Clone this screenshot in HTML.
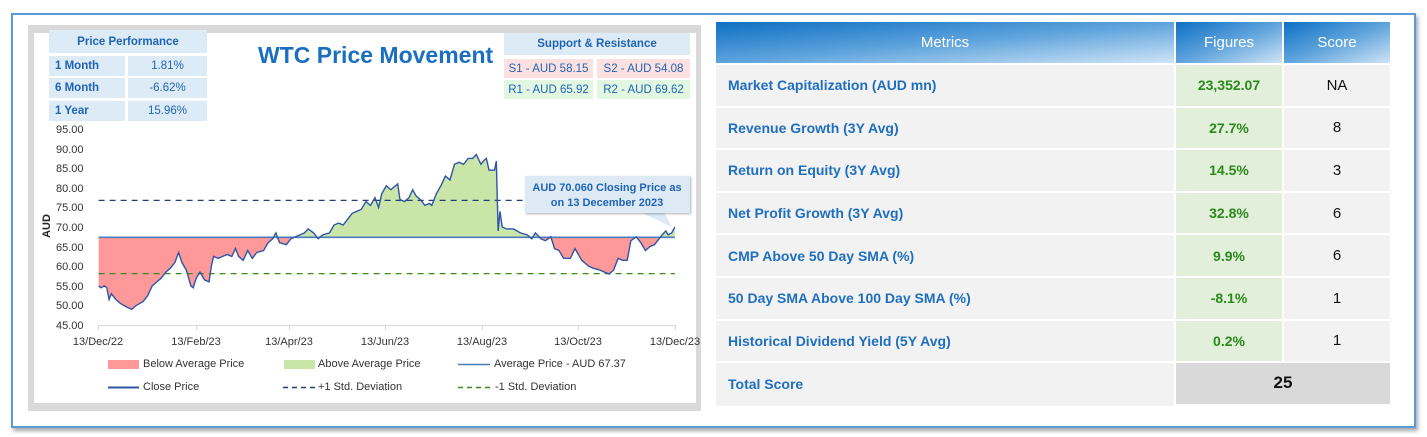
<!DOCTYPE html>
<html><head><meta charset="utf-8"><style>
*{margin:0;padding:0;box-sizing:border-box}
body{width:1427px;height:437px;background:#fff;position:relative;overflow:hidden;font-family:"Liberation Sans",sans-serif}
.abs{position:absolute}
.outer{left:11px;top:13px;width:1405px;height:415px;border:2px solid #5b9bd5;box-shadow:2px 3px 4px rgba(0,0,0,.35)}
.frame{left:28px;top:25px;width:673px;height:386px;background:#d9d9d9}
.inner{left:34px;top:33px;width:662px;height:370px;background:#fff}
.c{position:absolute;background:#ddebf7;color:#1f64b4;font-size:11.5px;display:flex;align-items:center}
.b{font-weight:bold}
.yl{position:absolute;left:56px;font-size:11px;color:#333;width:30px}
.xl{position:absolute;top:336px;font-size:11px;color:#333;width:70px;text-align:center}
.lg{position:absolute;font-size:11px;color:#333}
table{position:absolute;left:716px;top:22px;border-collapse:separate;border-spacing:0}
td{height:42.6px;border-bottom:2px solid #fff;font-size:14px;font-weight:bold}
.m{width:460px;background:#f2f2f2;color:#1f6fc0;padding-left:12px;border-right:2px solid #fff}
.f{width:108px;background:#e2efda;color:#2a8a1a;text-align:center;border-right:2px solid #fff}
.s{width:106px;background:#f2f2f2;color:#111;text-align:center;font-weight:normal;font-size:15px}
th{height:43px;color:#fff;font-weight:normal;font-size:15px;border-bottom:2px solid #fff;background:linear-gradient(to bottom right,#0e6fc4 0%,#5ea3dc 50%,#cfe4f6 100%)}
</style></head><body>
<div class="abs outer"></div>
<div class="abs frame"></div>
<div class="abs inner"></div>

<div class="c b" style="left:49px;top:30px;width:158px;height:23px;justify-content:center">Price Performance</div>
<div class="c b" style="left:49px;top:56px;width:76px;height:20px;padding-left:6px">1 Month</div>
<div class="c" style="left:128px;top:56px;width:79px;height:20px;justify-content:center">1.81%</div>
<div class="c b" style="left:49px;top:78px;width:76px;height:20px;padding-left:6px">6 Month</div>
<div class="c" style="left:128px;top:78px;width:79px;height:20px;justify-content:center">-6.62%</div>
<div class="c b" style="left:49px;top:101px;width:76px;height:20px;padding-left:6px">1 Year</div>
<div class="c" style="left:128px;top:101px;width:79px;height:20px;justify-content:center">15.96%</div>

<div class="abs" style="left:258px;top:42px;font-size:23px;font-weight:bold;color:#1a6fc0">WTC Price Movement</div>

<div class="c b" style="left:504px;top:33px;width:186px;height:22px;justify-content:center">Support &amp; Resistance</div>
<div class="c" style="left:504px;top:59px;width:89px;height:19px;justify-content:center;background:#fde0e0">S1 - AUD 58.15</div>
<div class="c" style="left:597px;top:59px;width:93px;height:19px;justify-content:center;background:#fde0e0">S2 - AUD 54.08</div>
<div class="c" style="left:504px;top:80px;width:89px;height:19px;justify-content:center;background:#e2f7e2">R1 - AUD 65.92</div>
<div class="c" style="left:597px;top:80px;width:93px;height:19px;justify-content:center;background:#e2f7e2">R2 - AUD 69.62</div>

<div class="yl" style="top:124px">95.00</div>
<div class="yl" style="top:144px">90.00</div>
<div class="yl" style="top:163px">85.00</div>
<div class="yl" style="top:183px">80.00</div>
<div class="yl" style="top:202px">75.00</div>
<div class="yl" style="top:222px">70.00</div>
<div class="yl" style="top:242px">65.00</div>
<div class="yl" style="top:261px">60.00</div>
<div class="yl" style="top:281px">55.00</div>
<div class="yl" style="top:300px">50.00</div>
<div class="yl" style="top:320px">45.00</div>
<div class="abs" style="left:35px;top:220px;font-size:11px;font-weight:bold;transform:rotate(-90deg);color:#222">AUD</div>

<svg class="abs" style="left:0;top:0" width="710" height="437">
<defs>
<clipPath id="up"><rect x="0" y="67.37" width="2000" height="40"/></clipPath>
<clipPath id="dn"><rect x="0" y="30" width="2000" height="37.37"/></clipPath>
</defs>
<g transform="matrix(0.4545,0,0,-3.92,0,501.4)">
<polygon fill="#c9e6a8" clip-path="url(#up)" points="217,55 222,54.5 230,55 235,54.5 240,51.5 245,53 255,51.5 265,50.5 280,49.5 290,49 300,50 315,51 325,52.5 335,55 345,56 355,57 365,58.5 375,59.5 385,61 393,63.5 400,61 410,59 420,55 425,54.5 432,57 440,58.5 450,56.5 460,56 465,60 470,62.5 480,62 490,62.5 500,63 510,62.5 518,64.5 525,62.5 535,61.5 545,64 555,62 565,63.5 580,64 590,66 600,67 607,68.5 615,66 630,65.5 640,67 650,67.5 660,68 670,68.5 678,69.5 690,68.5 700,67 710,68 725,68.5 735,70.5 745,71 755,70.5 765,72 775,73.5 785,74 795,74.5 805,76.5 815,75.5 825,77.5 833,75 840,78.5 850,80.5 860,79.5 875,81 880,77 890,76.5 900,77.5 908,79.5 915,78 925,77 935,75.5 945,76 950,75.5 960,78.5 970,80.5 980,83 990,82 1000,86 1010,86.5 1020,86 1030,87.5 1040,87.5 1048,88.5 1058,86 1065,87 1070,87.5 1076,84.5 1088,84.5 1092,86.8 1096,69 1100,74 1105,70 1115,69.5 1130,69.5 1145,68.5 1160,68 1170,67 1178,68.5 1190,67 1200,66.5 1212,67.5 1220,64.5 1230,64 1240,62 1255,62 1265,64.5 1280,61.5 1295,60 1305,59.5 1320,59 1330,58.5 1340,58 1350,59 1360,62 1370,61.5 1380,61.5 1388,66.5 1400,67.5 1410,66 1420,64 1430,65 1440,65.5 1450,67 1457,68 1465,69 1470,68 1478,68.5 1485,70 1485,67.37 217,67.37"/>
<polygon fill="#ff9999" clip-path="url(#dn)" points="217,55 222,54.5 230,55 235,54.5 240,51.5 245,53 255,51.5 265,50.5 280,49.5 290,49 300,50 315,51 325,52.5 335,55 345,56 355,57 365,58.5 375,59.5 385,61 393,63.5 400,61 410,59 420,55 425,54.5 432,57 440,58.5 450,56.5 460,56 465,60 470,62.5 480,62 490,62.5 500,63 510,62.5 518,64.5 525,62.5 535,61.5 545,64 555,62 565,63.5 580,64 590,66 600,67 607,68.5 615,66 630,65.5 640,67 650,67.5 660,68 670,68.5 678,69.5 690,68.5 700,67 710,68 725,68.5 735,70.5 745,71 755,70.5 765,72 775,73.5 785,74 795,74.5 805,76.5 815,75.5 825,77.5 833,75 840,78.5 850,80.5 860,79.5 875,81 880,77 890,76.5 900,77.5 908,79.5 915,78 925,77 935,75.5 945,76 950,75.5 960,78.5 970,80.5 980,83 990,82 1000,86 1010,86.5 1020,86 1030,87.5 1040,87.5 1048,88.5 1058,86 1065,87 1070,87.5 1076,84.5 1088,84.5 1092,86.8 1096,69 1100,74 1105,70 1115,69.5 1130,69.5 1145,68.5 1160,68 1170,67 1178,68.5 1190,67 1200,66.5 1212,67.5 1220,64.5 1230,64 1240,62 1255,62 1265,64.5 1280,61.5 1295,60 1305,59.5 1320,59 1330,58.5 1340,58 1350,59 1360,62 1370,61.5 1380,61.5 1388,66.5 1400,67.5 1410,66 1420,64 1430,65 1440,65.5 1450,67 1457,68 1465,69 1470,68 1478,68.5 1485,70 1485,67.37 217,67.37"/>
<line x1="217" y1="67.37" x2="1485" y2="67.37" stroke="#4a7ebb" stroke-width="1.6" vector-effect="non-scaling-stroke"/>
<line x1="217" y1="76.8" x2="1485" y2="76.8" stroke="#203f7a" stroke-width="1.3" stroke-dasharray="6,5" vector-effect="non-scaling-stroke"/>
<line x1="217" y1="58.1" x2="1485" y2="58.1" stroke="#3a8a1a" stroke-width="1.3" stroke-dasharray="6,5" vector-effect="non-scaling-stroke"/>
<polyline fill="none" stroke="#2f55a4" stroke-width="1.4" vector-effect="non-scaling-stroke" points="217,55 222,54.5 230,55 235,54.5 240,51.5 245,53 255,51.5 265,50.5 280,49.5 290,49 300,50 315,51 325,52.5 335,55 345,56 355,57 365,58.5 375,59.5 385,61 393,63.5 400,61 410,59 420,55 425,54.5 432,57 440,58.5 450,56.5 460,56 465,60 470,62.5 480,62 490,62.5 500,63 510,62.5 518,64.5 525,62.5 535,61.5 545,64 555,62 565,63.5 580,64 590,66 600,67 607,68.5 615,66 630,65.5 640,67 650,67.5 660,68 670,68.5 678,69.5 690,68.5 700,67 710,68 725,68.5 735,70.5 745,71 755,70.5 765,72 775,73.5 785,74 795,74.5 805,76.5 815,75.5 825,77.5 833,75 840,78.5 850,80.5 860,79.5 875,81 880,77 890,76.5 900,77.5 908,79.5 915,78 925,77 935,75.5 945,76 950,75.5 960,78.5 970,80.5 980,83 990,82 1000,86 1010,86.5 1020,86 1030,87.5 1040,87.5 1048,88.5 1058,86 1065,87 1070,87.5 1076,84.5 1088,84.5 1092,86.8 1096,69 1100,74 1105,70 1115,69.5 1130,69.5 1145,68.5 1160,68 1170,67 1178,68.5 1190,67 1200,66.5 1212,67.5 1220,64.5 1230,64 1240,62 1255,62 1265,64.5 1280,61.5 1295,60 1305,59.5 1320,59 1330,58.5 1340,58 1350,59 1360,62 1370,61.5 1380,61.5 1388,66.5 1400,67.5 1410,66 1420,64 1430,65 1440,65.5 1450,67 1457,68 1465,69 1470,68 1478,68.5 1485,70"/>
</g>
<line x1="98" y1="325.5" x2="675" y2="325.5" stroke="#d9d9d9"/>
<g stroke="#d9d9d9"><line x1="98.5" y1="325" x2="98.5" y2="330"/><line x1="196.5" y1="325" x2="196.5" y2="330"/><line x1="289.5" y1="325" x2="289.5" y2="330"/><line x1="385.5" y1="325" x2="385.5" y2="330"/><line x1="482.5" y1="325" x2="482.5" y2="330"/><line x1="578.5" y1="325" x2="578.5" y2="330"/><line x1="675.5" y1="325" x2="675.5" y2="330"/></g>
<polygon points="640,212 672,227 664,212" fill="#dde9f5"/>
<rect x="525" y="176" width="165" height="37" fill="#dde9f5" style="filter:drop-shadow(1px 1px 1px rgba(0,0,0,.3))"/>
<text x="607" y="191" font-size="11" font-weight="bold" fill="#1f64b4" text-anchor="middle" font-family="Liberation Sans">AUD 70.060 Closing Price as</text>
<text x="607" y="206" font-size="11" font-weight="bold" fill="#1f64b4" text-anchor="middle" font-family="Liberation Sans">on 13 December 2023</text>
<rect x="108" y="360" width="31" height="9" fill="#ff9999"/>
<rect x="284" y="360" width="31" height="9" fill="#c9e6a8"/>
<line x1="458" y1="364.5" x2="490" y2="364.5" stroke="#4a7ebb" stroke-width="1.5"/>
<line x1="108" y1="387.5" x2="139" y2="387.5" stroke="#2f55a4" stroke-width="2"/>
<line x1="283" y1="387.5" x2="316" y2="387.5" stroke="#203f7a" stroke-width="1.5" stroke-dasharray="5,4"/>
<line x1="458" y1="387.5" x2="491" y2="387.5" stroke="#3a8a1a" stroke-width="1.5" stroke-dasharray="5,4"/>
</svg>
<div class="xl" style="left:63px">13/Dec/22</div>
<div class="xl" style="left:161px">13/Feb/23</div>
<div class="xl" style="left:254px">13/Apr/23</div>
<div class="xl" style="left:350px">13/Jun/23</div>
<div class="xl" style="left:447px">13/Aug/23</div>
<div class="xl" style="left:543px">13/Oct/23</div>
<div class="xl" style="left:640px">13/Dec/23</div>
<div class="lg" style="left:143px;top:358px">Below Average Price</div>
<div class="lg" style="left:318px;top:358px">Above Average Price</div>
<div class="lg" style="left:494px;top:358px">Average Price - AUD 67.37</div>
<div class="lg" style="left:143px;top:381px">Close Price</div>
<div class="lg" style="left:318px;top:381px">+1 Std. Deviation</div>
<div class="lg" style="left:495px;top:381px">-1 Std. Deviation</div>

<table>
<tr><th style="width:460px;border-right:2px solid #fff">Metrics</th><th style="width:108px;border-right:2px solid #fff">Figures</th><th style="width:106px">Score</th></tr>
<tr><td class="m">Market Capitalization (AUD mn)</td><td class="f">23,352.07</td><td class="s">NA</td></tr>
<tr><td class="m">Revenue Growth (3Y Avg)</td><td class="f">27.7%</td><td class="s">8</td></tr>
<tr><td class="m">Return on Equity (3Y Avg)</td><td class="f">14.5%</td><td class="s">3</td></tr>
<tr><td class="m">Net Profit Growth (3Y Avg)</td><td class="f">32.8%</td><td class="s">6</td></tr>
<tr><td class="m">CMP Above 50 Day SMA (%)</td><td class="f">9.9%</td><td class="s">6</td></tr>
<tr><td class="m">50 Day SMA Above 100 Day SMA (%)</td><td class="f">-8.1%</td><td class="s">1</td></tr>
<tr><td class="m">Historical Dividend Yield (5Y Avg)</td><td class="f">0.2%</td><td class="s">1</td></tr>
<tr><td class="m" style="border-bottom:none">Total Score</td><td colspan="2" style="background:#d9d9d9;text-align:center;font-weight:bold;font-size:17px;color:#111">25</td></tr>
</table>
</body></html>
